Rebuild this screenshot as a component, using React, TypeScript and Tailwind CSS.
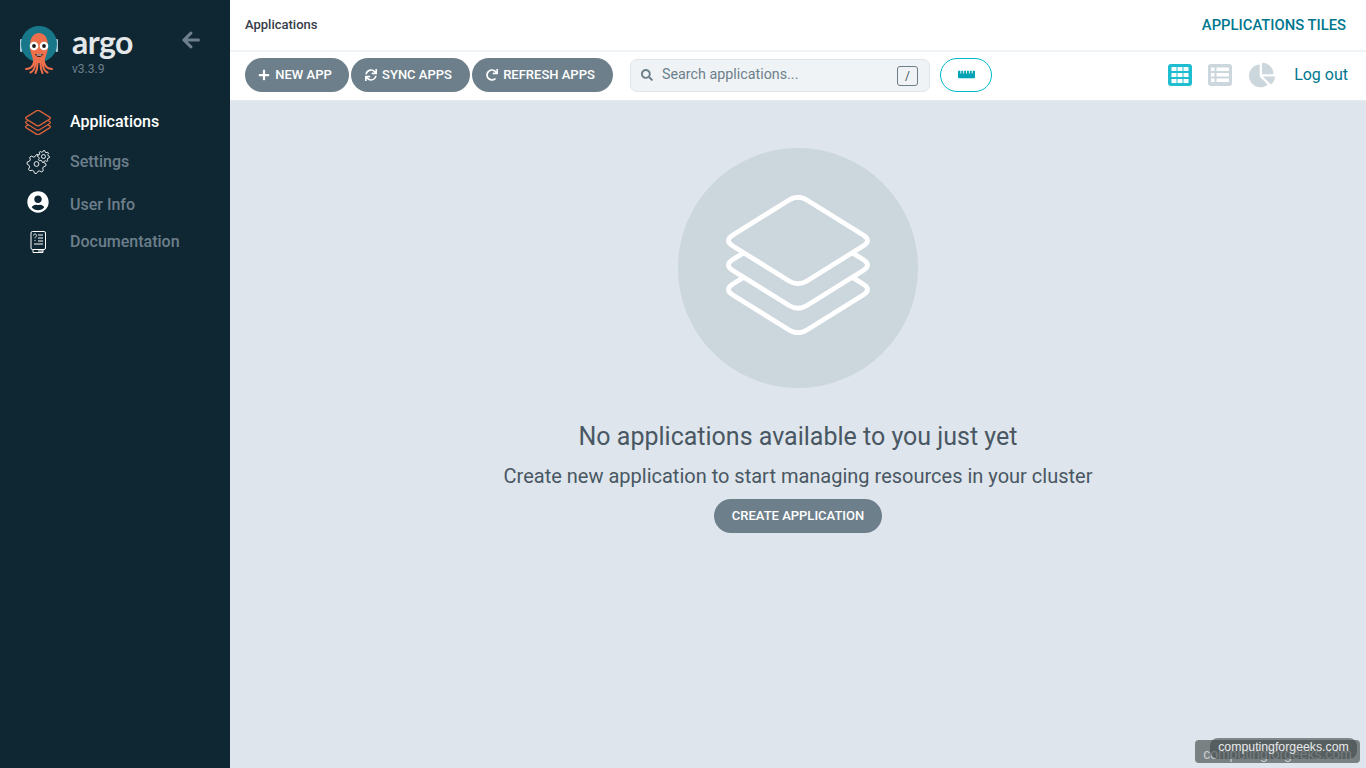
import { FaArrowLeft, FaChartPie, FaPlus, FaRedo, FaRulerHorizontal, FaSearch, FaSync, FaUserCircle } from "react-icons/fa";

function ArgoLogo() {
    return (
        <svg width="40" height="52" viewBox="0 0 40 52" className="-mt-[1px] shrink-0">
            <rect x="1" y="15" width="2.500" height="13" rx="1" fill="#a9cbd8" />
            <rect x="36.500" y="15" width="2.500" height="13" rx="1" fill="#a9cbd8" />
            <circle cx="20" cy="20" r="18" fill="#18788a" />
            <path d="M11 22c0-8 3.500-13 9-13s9 5 9 13c0 7-3 10-3.500 17h-11c-.5-7-3.500-10-3.500-17z" fill="#ee6f4b" />
            <path d="M15 38c-1 5-4 7-8 7M16.500 39c-.5 5-2 8-5 9.500M18.500 39c0 4-.5 7-2 10M21.500 39c0 4 .5 7 2 10M23.500 39c.5 5 2 8 5 9.500M25 38c1 5 4 7 8 7" stroke="#ee6f4b" strokeWidth="2" fill="none" strokeLinecap="round" />
            <circle cx="15" cy="22" r="4.300" fill="#fff" />
            <circle cx="25" cy="22" r="4.300" fill="#fff" />
            <circle cx="15" cy="22" r="1.900" fill="#1b1b1b" />
            <circle cx="25" cy="22" r="1.900" fill="#1b1b1b" />
            <path d="M16 30c1 4 7 4 8 0z" fill="#3a1712" />
            <path d="M17.500 30.500h5v1h-5z" fill="#fff" />
        </svg>
    );
}

function LayersIcon({ className, strokeWidth = 4.8 }: { className?: string; strokeWidth?: number }) {
    const lower = (cy: number) =>
        `M18 ${cy - 12.4}L6.880 ${cy - 5.52}Q-2 ${cy} 6.880 ${cy + 5.52}L63.100 ${cy + 40.5}Q72 ${cy + 46} 80.900 ${cy + 40.5}L137.100 ${cy + 5.52}Q146 ${cy} 137.100 ${cy - 5.52}L126 ${cy - 12.4}`;
    return (
        <svg viewBox="0 0 144 140" fill="none" stroke="currentColor" strokeWidth={strokeWidth} strokeLinejoin="round" className={className}>
            <path d="M63.100 5.020Q72 -.5 80.900 5.020L137.100 40Q146 45.500 137.100 51L80.900 86Q72 91.500 63.100 86L6.880 51Q-2 45.500 6.880 40Z" />
            <path d={lower(70)} />
            <path d={lower(94.5)} />
        </svg>
    );
}

// toothed outline for the settings icon
function gearPath(cx: number, cy: number, outer: number, inner: number, teeth: number) {
    const pts: string[] = [];
    const step = (Math.PI * 2) / (teeth * 4);
    for (let i = 0; i < teeth * 4; i++) {
        const r = i % 4 === 0 || i % 4 === 1 ? outer : inner;
        const a = i * step;
        pts.push(`${(cx + r * Math.cos(a)).toFixed(2)} ${(cy + r * Math.sin(a)).toFixed(2)}`);
    }
    return `M${pts.join("L")}Z`;
}

function SettingsIcon() {
    return (
        <svg width="24" height="24" viewBox="0 0 24 24" fill="none" stroke="#fff" strokeWidth="0.900" strokeLinejoin="round">
            <path d={gearPath(10.5, 14, 9.5, 7.5, 8)} />
            <circle cx="10.500" cy="14" r="2.400" />
            <path d={gearPath(17.5, 6.5, 6, 4.6, 8)} fill="#0f2733" />
            <circle cx="17.500" cy="6.500" r="2" />
        </svg>
    );
}

function DocsIcon() {
    return (
        <svg width="16" height="22" viewBox="0 0 16 22" fill="none" stroke="#fff" strokeWidth="1">
            <rect x="1" y="0.500" width="14.500" height="18" rx="1.500" />
            <path d="M3 18.500v3h10v-3M8 20h5M8 4h5M8 7h5M8 10h5M4 13h9" />
            <path d="M3.500 4.500c0-2 3-2 3 0 0 1.200-1.500 1.300-1.500 2.800M5 9v1" strokeWidth="0.900" />
        </svg>
    );
}

function TilesIcon() {
    return (
        <svg width="24" height="22" viewBox="0 0 24 22">
            <rect width="24" height="22" rx="3" fill="#1fbdd0" />
            {[3, 9, 15].map((y) =>
                [3.5, 9.5, 15.5].map((x) => <rect key={`${x}-${y}`} x={x} y={y} width="5" height="4" fill="#fff" />)
            )}
        </svg>
    );
}

function ListIcon() {
    return (
        <svg width="24" height="22" viewBox="0 0 24 22">
            <rect width="24" height="22" rx="3" fill="#ccd6dd" />
            {[3.5, 9, 14.5].map((y) => (
                <g key={y} fill="#fff">
                    <rect x="3" y={y} width="3.500" height="3.500" />
                    <rect x="8.500" y={y} width="12.500" height="3.500" />
                </g>
            ))}
        </svg>
    );
}

function PillButton({ icon, label, width }: { icon: React.ReactNode; label: string; width: string }) {
    return (
        <button className={`flex h-[34px] items-center justify-center gap-[5px] rounded-full bg-[#6d7f8b] pr-[4px] text-[13px] font-medium text-white ${width}`}>
            {icon}
            {label}
        </button>
    );
}

const navItems = [
    { label: "Applications", icon: <LayersIcon strokeWidth={7} className="h-[25px] w-[26px] shrink-0 text-[#d9623a]" />, row: "h-[40px] text-white" },
    { label: "Settings", icon: <SettingsIcon />, row: "h-[40px] text-[#6d7f8b]" },
    { label: "User Info", icon: <FaUserCircle size={22} color="#fff" className="-mt-[6px]" />, row: "mt-[3px] h-[40px] text-[#6d7f8b]" },
    { label: "Documentation", icon: <DocsIcon />, row: "h-[34px] text-[#6d7f8b]" },
];

export default function App() {
    return (
        <div className="relative flex h-screen w-full overflow-hidden bg-[#dee5ec] font-['Roboto',sans-serif]">
            {/* Sidebar */}
            <aside className="flex w-[230px] shrink-0 flex-col bg-[#0f2733]">
                <div className="flex h-[102px] items-start pl-[19px] pt-[25px]">
                    <ArgoLogo />
                    <div className="ml-[13px] flex w-[60px] flex-col">
                        <span className="mt-[-3px] font-['Lato',sans-serif] text-[32px] font-bold leading-[40px] tracking-[-0.5px] text-[#e4e8ea]">argo</span>
                        <span className="mt-[-3px] text-[12px] leading-[20px] text-[#6d7f8b]">v3.3.9</span>
                    </div>
                    <FaArrowLeft size={20} color="#6d7f8b" className="ml-[49px] mt-[5px]" />
                </div>
                <nav className="flex flex-col">
                    {navItems.map((item) => (
                        <div key={item.label} className={`flex items-center text-[16px] font-medium ${item.row}`}>
                            <div className="ml-[26px] mr-[20px] flex w-[24px] justify-center">{item.icon}</div>
                            {item.label}
                        </div>
                    ))}
                </nav>
            </aside>

            <div className="flex min-w-0 flex-1 flex-col">
                {/* Top bar */}
                <header className="flex h-[52px] shrink-0 items-center justify-between border-b-2 border-[#eff3f5] bg-white pl-[15px] pr-[20px]">
                    <span className="text-[13px] font-medium text-[#363c4a]">Applications</span>
                    <span className="text-[14.8px] font-medium text-[#00778f]">APPLICATIONS TILES</span>
                </header>

                {/* Toolbar */}
                <div className="flex h-[48px] shrink-0 items-start bg-white pl-[15px] pr-[18px] pt-[6px]">
                    <div className="flex gap-[2px]">
                        <PillButton icon={<FaPlus size={12} />} label="NEW APP" width="w-[104px]" />
                        <PillButton icon={<FaSync size={12} />} label="SYNC APPS" width="w-[119px]" />
                        <PillButton icon={<FaRedo size={12} />} label="REFRESH APPS" width="w-[141px]" />
                    </div>
                    <div className="ml-[17px] mt-[1px] flex h-[33px] w-[300px] items-center rounded-[7px] border border-[#dee6eb] bg-[#eff3f5] pl-[10px] pr-[11px]">
                        <FaSearch size={12} color="#6d7f8b" className="-mt-[2px]" />
                        <span className="ml-[9px] flex-1 pb-[2px] text-[14.3px] text-[#6d7f8b]">Search applications...</span>
                        <span className="flex h-[20px] w-[21px] items-center justify-center rounded-[3px] border border-[#6d7f8b] text-[12px] text-[#495763]">/</span>
                    </div>
                    <button className="ml-[10px] flex h-[34px] w-[52px] items-center justify-center rounded-full border border-[#00b8cc]">
                        <FaRulerHorizontal size={17} color="#00a2b3" className="-mt-[2px]" />
                    </button>
                    <div className="ml-auto flex h-[34px] items-center">
                        <TilesIcon />
                        <span className="ml-[16px]"><ListIcon /></span>
                        <FaChartPie size={26} color="#ccd6dd" className="ml-[17px]" />
                        <span className="ml-[19px] text-[16px] text-[#00778f]">Log out</span>
                    </div>
                </div>

                {/* Empty state */}
                <main className="flex flex-1 flex-col items-center border-t border-[#e3e9ed] pt-[47px]">
                    <div className="flex h-[240px] w-[240px] items-center justify-center rounded-full bg-[#ccd6dd]">
                        <LayersIcon className="mb-[6px] h-[140px] w-[144px] text-white" />
                    </div>
                    <div className="mt-[33px] text-[25px] leading-[32px] text-[#495763]">No applications available to you just yet</div>
                    <div className="mt-[9px] text-[20px] leading-[28px] text-[#495763]">Create new application to start managing resources in your cluster</div>
                    <button className="mt-[9px] h-[34px] w-[168px] rounded-full bg-[#6d7f8b] text-[13px] font-medium text-white">CREATE APPLICATION</button>
                </main>
            </div>

            {/* Watermark badges */}
            <div className="absolute left-[1195px] top-[740px] flex h-[23px] w-[165px] items-center justify-center rounded-[4px] bg-[#6f7678]/90 pt-[5px] font-['Liberation_Sans',sans-serif] text-[14px] text-[#c9cdcf]">computingforgeeks.com</div>
            <div className="absolute left-[1210px] top-[738px] flex h-[21px] w-[147px] items-center justify-center rounded-[8px] bg-[#3f474a]/60 pb-[2px] font-['Liberation_Sans',sans-serif] text-[12.3px] text-[#e8eaeb]">computingforgeeks.com</div>
        </div>
    );
}
